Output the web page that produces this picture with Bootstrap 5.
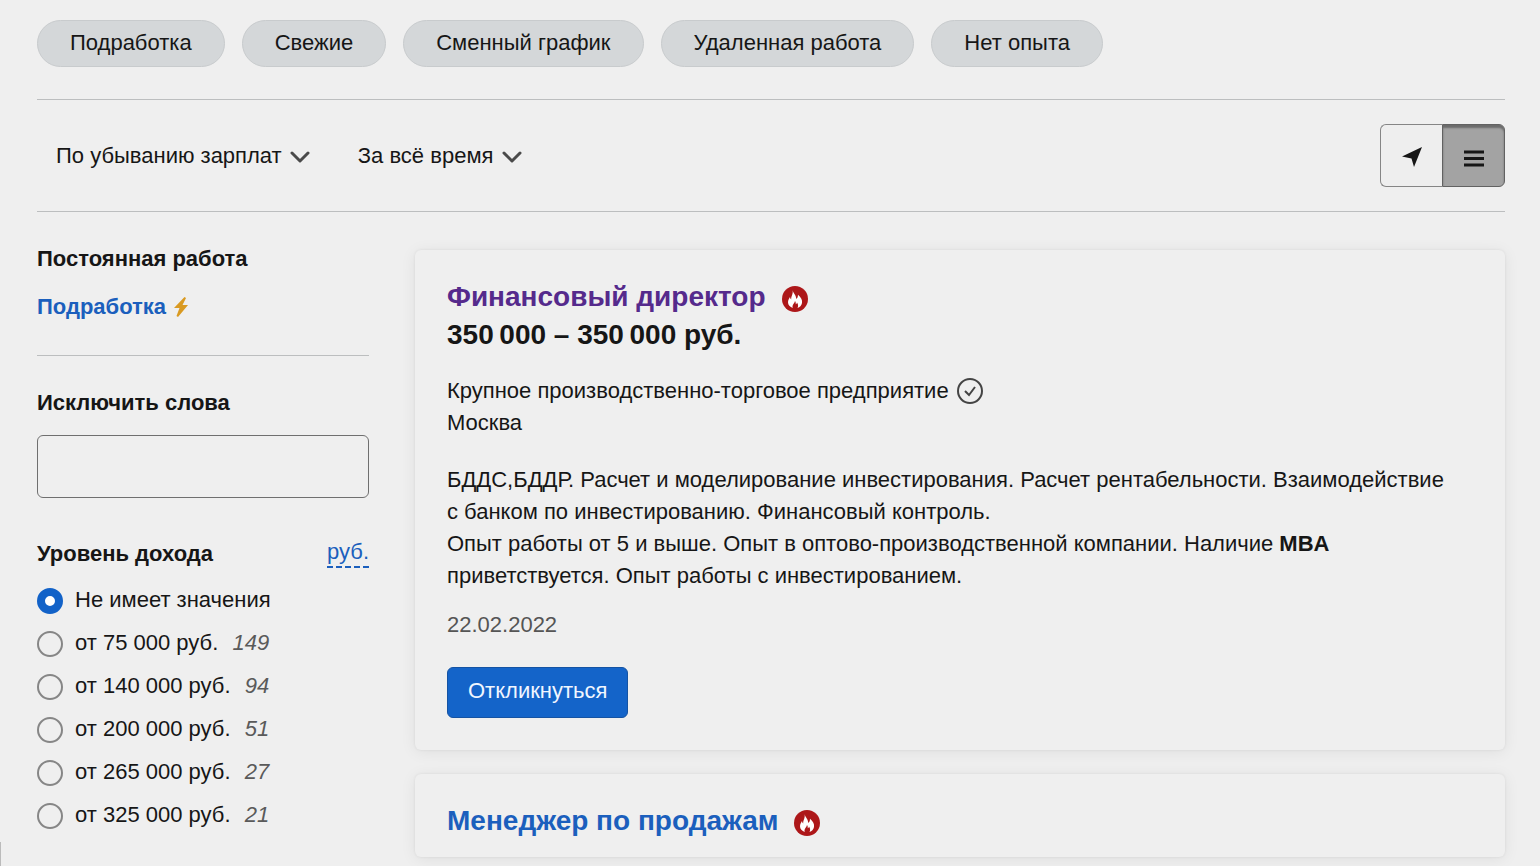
<!DOCTYPE html>
<html lang="ru">
<head>
<meta charset="utf-8">
<meta name="viewport" content="width=device-width, initial-scale=1">
<title>Вакансии</title>
<link href="https://cdn.jsdelivr.net/npm/bootstrap@5.3.0/dist/css/bootstrap.min.css" rel="stylesheet">
<script src="https://cdn.jsdelivr.net/npm/bootstrap@5.3.0/dist/js/bootstrap.bundle.min.js" defer></script>
<style>
  body { font: 22px/32px "Liberation Sans", Arial, sans-serif; color: #161616; background: #efefef; }
  a { text-decoration: none; color: #1b5fbd; }
  .page { padding: 20px 35px 0 37px; }
  .rule { border-color: #bcbebf !important; }
  .tags { gap: 17px; }
  .tag-pill { height: 47px; padding: 0 32px 2px; border: 1px solid #c8cbcd; border-radius: 24px; background: #d4d7d9; color: inherit; line-height: 42px; }
  .sort-btn { border: 0; background: none; padding: 0; color: inherit; }
  .sort-btn svg { margin-left: 2px; }
  .filters { height: 113px; padding-left: 19px; }
  .view-btn { width: 62px; height: 63px; border: 1px solid #858585; background: #eee; padding: 0; }
  .view-btn:first-child { border-radius: 6px 0 0 6px; border-right: 0; }
  .view-btn.on { width: 63px; border-radius: 0 6px 6px 0; border-color: #626262; background: #a3a3a3; box-shadow: inset 0 3px 2px #6b6b6b; }
  .aside { flex: 0 0 332px; padding-top: 31px; }
  .content { padding: 38px 0 0 46px; }
  .word-input { height: 63px; border: 1px solid #6f6f6f; border-radius: 6px; background: transparent; }
  .exclude-label { padding-top: 15px; }
  .currency { line-height: 28px; border-bottom: 2px dashed #1b5fbd; }
  .level { height: 43px; gap: 12px; }
  .level input { appearance: none; width: 26px; height: 26px; margin: 3px 0 0; border: 2px solid #868686; border-radius: 50%; flex: none; }
  .level input:checked { border: 8px solid #1262c8; background: #fff; }
  .level i { color: #5a5a5a; margin-left: 8px; }
  .job { border-radius: 6px; background: #efefef; box-shadow: 0 2px 16px rgba(0,0,0,.07), 0 0 3px rgba(0,0,0,.07); padding: 28px 48px 32px 32px; margin-bottom: 24px; }
  .job-brief { padding-bottom: 17px; }
  .job h2 { font-size: 28px; line-height: 38px; font-weight: 700; margin: 0; }
  .pay { font-size: 28px; line-height: 38px; font-weight: 700; margin-bottom: 17px; }
  .visited { color: #552a8c; }
  .city { margin-bottom: 25px; }
  .apply { height: 51px; padding: 0 20px 4px; border: 1px solid #1553a3; border-radius: 6px; background: #1464c9; color: #f0f6ff; }
  .date { color: #555; margin: 17px 0 26px; }
  .edge { width: 1px; height: 24px; background: #bbb; }
</style>
</head>
<body>
<svg class="d-none">
  <symbol id="fire" viewBox="0 0 26 26"><circle cx="13" cy="13" r="13" fill="#ad1719"/><path fill="#fff" d="M10.500 4C11 7 14 8.500 14.300 13c1-.8 1.700-2 1.700-4.200 3 2.500 4.600 5.200 4 8.200-.5 2.500-2.200 4.300-4.500 5 .9-1.500.9-3.500-.5-5.500-.2 1-.7 1.500-1.300 1.800.2-1.300 0-2.400-.7-3.300-.3 2.500-2.500 3.200-2.500 5.500 0 .6.100 1 .3 1.500C8 21 6 19 6 16.200c0-2 1-3.300 2-5.200.1 1.200.5 2 1.200 2.500C9 10 11.500 8 10.500 4z"/></symbol>
  <symbol id="down" viewBox="0 0 20 14"><path d="M2 3l8 8 8-8" fill="none" stroke="#4a4a4a" stroke-width="3" stroke-linecap="round" stroke-linejoin="round"/></symbol>
</svg>
<div class="page min-vh-100">
  <nav class="tags d-flex pb-3 mb-3" aria-label="Подборки">
    <button class="tag-pill">Подработка</button>
    <button class="tag-pill">Свежие</button>
    <button class="tag-pill">Сменный график</button>
    <button class="tag-pill">Удаленная работа</button>
    <button class="tag-pill">Нет опыта</button>
  </nav>
  <div class="filters rule border-top border-bottom d-flex align-items-center">
    <button class="sort-btn me-5">По убыванию зарплат <svg width="20" height="14"><use href="#down"/></svg></button>
    <button class="sort-btn">За всё время <svg width="20" height="14"><use href="#down"/></svg></button>
    <div class="d-flex ms-auto">
      <button class="view-btn" aria-label="На карте"><svg width="20" height="20" viewBox="0 0 20 20"><path d="M20 0L12 20 9.500 11.500 0 9.500z" fill="#161616"/></svg></button>
      <button class="view-btn on" aria-label="Списком"><svg class="mt-1" width="20" height="17" viewBox="0 0 20 17"><path d="M0 2h20M0 8.500h20M0 15h20" stroke="#161616" stroke-width="3"/></svg></button>
    </div>
  </div>
  <div class="d-flex">
    <aside class="aside">
      <div class="fw-bold mb-3">Постоянная работа</div>
      <div class="fw-bold d-flex align-items-center gap-2"><a href="#">Подработка</a><svg width="14" height="20" viewBox="0 0 14 20"><path d="M10.500 0L0 11h5.500L2.500 19 4 20 14 8H8.500L12 1z" fill="#d99a22"/></svg></div>
      <div class="rule border-bottom pt-3 mt-3 mb-3"></div>
      <label for="exclude" class="exclude-label fw-bold d-block mb-3">Исключить слова</label>
      <input id="exclude" type="text" class="word-input w-100 d-block">
      <div class="d-flex justify-content-between align-items-start mt-4 pt-3 mb-2"><b>Уровень дохода</b><a href="#" class="currency">руб.</a></div>
      <div class="level d-flex align-items-center"><input type="radio" name="pay" id="p0" checked><label for="p0">Не имеет значения</label></div>
      <div class="level d-flex align-items-center"><input type="radio" name="pay" id="p1"><label for="p1">от 75 000 руб. <i>149</i></label></div>
      <div class="level d-flex align-items-center"><input type="radio" name="pay" id="p2"><label for="p2">от 140 000 руб. <i>94</i></label></div>
      <div class="level d-flex align-items-center"><input type="radio" name="pay" id="p3"><label for="p3">от 200 000 руб. <i>51</i></label></div>
      <div class="level d-flex align-items-center"><input type="radio" name="pay" id="p4"><label for="p4">от 265 000 руб. <i>27</i></label></div>
      <div class="level d-flex align-items-center"><input type="radio" name="pay" id="p5"><label for="p5">от 325 000 руб. <i>21</i></label></div>
    </aside>
    <main class="content flex-grow-1">
      <article class="job">
        <h2 class="d-flex align-items-center"><a href="#" class="visited">Финансовый директор</a><svg class="ms-3 mt-1" width="26" height="26"><use href="#fire"/></svg></h2>
        <div class="pay">350&#8201;000 – 350&#8201;000 руб.</div>
        <div class="d-flex align-items-center pt-1 gap-2">Крупное производственно-торговое предприятие<svg width="26" height="26" viewBox="0 0 26 26" fill="none" stroke="#444" stroke-width="2"><circle cx="13" cy="13" r="12"/><path d="M8 13l4 4 6-8"/></svg></div>
        <div class="city">Москва</div>
        <p class="mb-0">БДДС,БДДР. Расчет и моделирование инвестирования. Расчет рентабельности. Взаимодействие с банком по инвестированию. Финансовый контроль.<br>Опыт работы от 5 и выше. Опыт в оптово-производственной компании. Наличие <b>MBA</b> приветствуется. Опыт работы с инвестированием.</p>
        <div class="date">22.02.2022</div>
        <button class="apply">Откликнуться</button>
      </article>
      <article class="job job-brief mb-0">
        <h2 class="d-flex align-items-center"><a href="#">Менеджер по продажам</a><svg class="ms-3 mt-1" width="26" height="26"><use href="#fire"/></svg></h2>
      </article>
    </main>
  </div>
</div>
<div class="edge position-fixed bottom-0 start-0"></div>
</body>
</html>
